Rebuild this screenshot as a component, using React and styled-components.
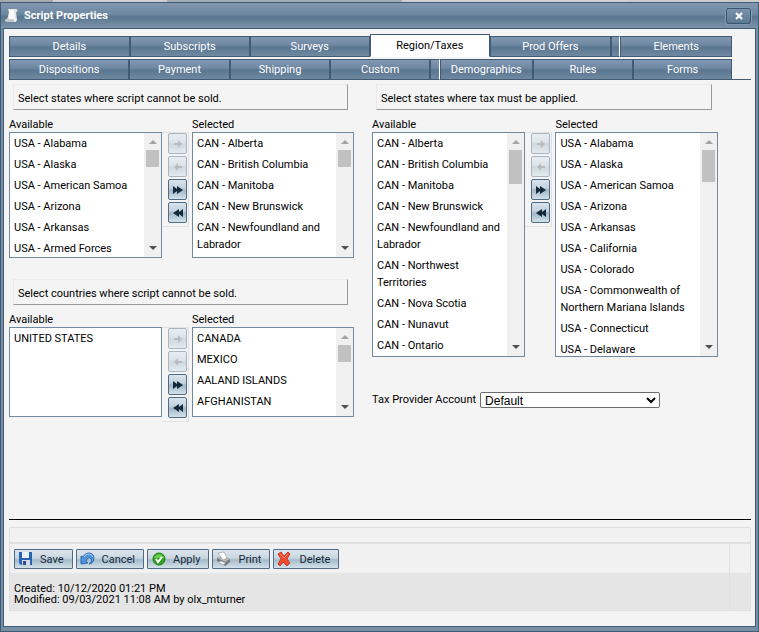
import React, { useState } from 'react'
import styled, { createGlobalStyle } from 'styled-components'

const GlobalStyle = createGlobalStyle`
  * {
    box-sizing: border-box;
  }
  body {
    margin: 0;
    background: #f4f4f4;
    font-family: Roboto, 'Open Sans', sans-serif;
    font-size: 11px;
    line-height: 17px;
    color: #000;
  }
  button {
    font: inherit;
    margin: 0;
    cursor: pointer;
  }
`

const Page = styled.div`
  display: flex;
  flex-direction: column;
  min-height: 100vh;
`

const Backdrop = styled.div`
  height: 2px;
  background: linear-gradient(
    to right,
    #a3a9ad 0 7%,
    #d0d0d0 7% 22%,
    #a5adb4 22% 53%,
    #d0d0d0 53% 83%,
    #cccccc 83%
  );
`

const Dialog = styled.section`
  flex: 1;
  display: flex;
  flex-direction: column;
  padding: 0 2px 4px;
  background: #778fa6;
  border: 1px solid #425b74;
`

const TitleBar = styled.header`
  display: flex;
  align-items: center;
  height: 25px;
  margin: 0 -2px;
  padding: 0 7px 0 4px;
  background: linear-gradient(#8097b0 0%, #6e88a2 45%, #59758f 55%, #7b94aa 100%);

  h1 {
    flex: 1;
    margin: 0 0 0 5px;
    color: #fff;
    font-size: 11px;
    font-weight: 700;
  }
`

const CloseButton = styled.button`
  display: flex;
  align-items: center;
  justify-content: center;
  width: 25px;
  height: 16px;
  padding: 0;
  border: 1px solid #3c5670;
  border-radius: 2px;
  background: linear-gradient(#7b93ab, #5c7892);
  box-shadow: 0 0 0 1px #8198ae;
`

const Content = styled.div`
  flex: 1;
  display: flex;
  flex-direction: column;
  padding: 5px 4px 15px 5px;
  background: #f4f4f4;
  border: 1px solid #425b74;
`

const TabRow = styled.div`
  display: flex;
  align-items: flex-end;
  height: 23px;
  padding-right: 19px;

  & + & {
    padding-right: 0;
  }
`

const Tab = styled.button`
  flex: ${(p) => p.$grow} 1 0;
  min-width: 0;
  height: ${(p) => (p.$active ? 23 : 21)}px;
  padding: 0;
  color: ${(p) => (p.$active ? '#000' : '#fff')};
  border: 1px solid #425b74;
  border-bottom-color: ${(p) => (p.$active ? '#fff' : '#425b74')};
  background: ${(p) =>
    p.$active
      ? '#fff'
      : 'linear-gradient(#8198b1 0%, #7089a3 40%, #5a7690 55%, #7089a1 100%)'};
`

const TabSlack = styled.span`
  flex: 8 1 0;
  height: 21px;
  border: 1px solid #425b74;
  border-right: 1px solid #fff;
  background: linear-gradient(#8198b1 0%, #7089a3 40%, #5a7690 55%, #7089a1 100%);
`

const TabRest = styled.span`
  flex: 0 0 19px;
  height: 21px;
  border-bottom: 1px solid #425b74;
`

const Columns = styled.main`
  display: grid;
  grid-template-columns: 345fr 346fr;
  column-gap: 18px;
  align-items: start;
  padding: 4px 33px 0 0;
`

const Group = styled.section`
  margin-bottom: 21px;
`

const Instruction = styled.p`
  margin: 0 6px 5px 4px;
  padding: 5px 4px 2px;
  border: 1px solid #eaeaea;
  border-right-color: #999;
  border-bottom-color: #999;
`

const Picker = styled.div`
  display: flex;
  align-items: flex-start;
`

const ListColumn = styled.div`
  flex: ${(p) => p.$grow} 1 0;
  min-width: 0;
  margin-left: ${(p) => p.$offset || 0}px;
`

const ListLabel = styled.div`
  height: 17px;
  line-height: 19px;
`

const ListBox = styled.div`
  display: flex;
  height: ${(p) => p.$height}px;
  border: 1px solid #718aa3;
  background: #fff;
`

const Items = styled.ul`
  flex: 1;
  min-width: 0;
  margin: 0;
  padding: 0;
  list-style: none;
  overflow-y: auto;
  scrollbar-width: none;
`

const Item = styled.li`
  padding: 2px 4px;
`

const Scrollbar = styled.div`
  display: flex;
  flex-direction: column;
  align-items: center;
  width: 17px;
  background: #f0f0f0;

  svg {
    flex: none;
  }
`

const Thumb = styled.div`
  width: 13px;
  height: ${(p) => p.$size}px;
  margin-bottom: auto;
  background: #c1c1c1;
`

const Transfer = styled.div`
  display: flex;
  flex-direction: column;
  align-items: flex-end;
  gap: 2px;
  width: 27px;
  margin-top: 17px;
  padding: 0 1px 3px;
  border: 1px solid #e2e2e2;
  border-left: 0;
`

const TransferButton = styled.button`
  display: flex;
  align-items: center;
  justify-content: center;
  width: 19px;
  height: 21px;
  padding: 0;
  border: 1px solid #4f6b86;
  border-radius: 2px;
  background: linear-gradient(#d9e4ec 0%, #c4d3df 40%, #a2b8c8 55%, #d3e2ea 100%);

  &:disabled {
    opacity: 0.45;
    cursor: default;
  }
`

const TaxField = styled.div`
  display: flex;
  align-items: center;
  gap: 4px;
  margin-top: 34px;

  select {
    width: 180px;
    height: 16px;
    padding: 0;
    border: 1px solid #6b6b6b;
    border-radius: 2px;
    background: #fff;
    color: #000;
    font-family: 'Liberation Sans', Arial, sans-serif;
    font-size: 12px;
  }
`

const Footer = styled.footer`
  margin-top: auto;
  padding-top: 7px;
  border-top: 1px solid #000;
`

const FooterGrid = styled.div`
  border: 1px solid #dfdfdf;
  background: #f1f1f1;
`

const FooterSpacer = styled.div`
  height: 16px;
  border-bottom: 2px solid #dfdfdf;
`

const FooterRow = styled.div`
  display: grid;
  grid-template-columns: 1fr 21px;
  background: ${(p) => (p.$shaded ? '#e5e5e5' : '#f1f1f1')};

  & > :last-child {
    border-left: 1px solid #dfdfdf;
  }
`

const Toolbar = styled.div`
  display: flex;
  gap: 3px;
  padding: 5px 4px 4px;
`

const ActionButton = styled.button`
  display: flex;
  align-items: center;
  gap: 7px;
  height: 20px;
  padding: 0 8px 0 2px;
  color: #16293a;
  border: 1px solid #4f6b86;
  border-radius: 1px;
  background: linear-gradient(#dce5ec 0%, #c9d6e0 45%, #a5bac9 55%, #d3e2ea 100%);
`

const AuditInfo = styled.div`
  padding: 10px 4px 5px;
  line-height: 11px;
`

const topTabs = [
  { name: 'Details', grow: 121 },
  { name: 'Subscripts', grow: 121 },
  { name: 'Surveys', grow: 120 },
  { name: 'Region/Taxes', grow: 121 },
  { name: 'Prod Offers', grow: 121, slack: true },
  { name: 'Elements', grow: 112 },
]

const bottomTabs = [
  { name: 'Dispositions', grow: 121 },
  { name: 'Payment', grow: 101 },
  { name: 'Shipping', grow: 101 },
  { name: 'Custom', grow: 100, slack: true },
  { name: 'Demographics', grow: 93 },
  { name: 'Rules', grow: 101 },
  { name: 'Forms', grow: 99 },
]

const usStates = [
  'USA - Alabama',
  'USA - Alaska',
  'USA - American Samoa',
  'USA - Arizona',
  'USA - Arkansas',
]

const canada = [
  'CAN - Alberta',
  'CAN - British Columbia',
  'CAN - Manitoba',
  'CAN - New Brunswick',
  'CAN - Newfoundland and Labrador',
]

const taxAvailable = [
  ...canada,
  'CAN - Northwest Territories',
  'CAN - Nova Scotia',
  'CAN - Nunavut',
  'CAN - Ontario',
]

const taxSelected = [
  ...usStates,
  'USA - California',
  'USA - Colorado',
  'USA - Commonwealth of Northern Mariana Islands',
  'USA - Connecticut',
  'USA - Delaware',
]

const countries = ['CANADA', 'MEXICO', 'AALAND ISLANDS', 'AFGHANISTAN']

const arrows = {
  right: 'M2 5h4V2l4 4-4 4V7H2z',
  left: 'M10 5H6V2L2 6l4 4V7h4z',
  allRight: 'M1 2l4 3V2l6 4-6 4V7l-4 3z',
  allLeft: 'M11 2L7 5V2L1 6l6 4V7l4 3z',
}

function Arrow({ kind }) {
  return (
    <svg width="12" height="12" viewBox="0 0 12 12">
      <path d={arrows[kind]} fill={kind.startsWith('all') ? '#122a3b' : '#777'} />
    </svg>
  )
}

function ScriptIcon() {
  return (
    <svg width="14" height="16" viewBox="0 0 14 16">
      <path d="M3 1h8c2 0 2 3 0 3l1 8H2l2-8z" fill="#e1e5e8" />
      <path d="M4 2h5l1 9H4z" fill="#fafafa" />
      <path d="M0 12c0-1 1-1 2-1h7c-1 1 0 3 1 3H2c-1 0-2-1-2-2z" fill="#c6cacd" />
      <path d="M9 11h3c0 2-1 3-2 3s-2-2-1-3z" fill="#eff1f2" />
    </svg>
  )
}

function SaveIcon() {
  return (
    <svg width="16" height="16" viewBox="0 0 16 16">
      <path d="M2 1h13v13H4l-2-2z" fill="#2a62b5" />
      <path d="M5 1h7v6H5z" fill="#e9f1fb" />
      <path d="M5 9h8v5H5z" fill="#d5dce6" />
      <path d="M6 10h3v4H6z" fill="#244f92" />
    </svg>
  )
}

function CancelIcon() {
  return (
    <svg width="16" height="16" viewBox="0 0 16 16">
      <path
        d="M2 5v8l7-1-2-2c1-3 4-4 5-2s0 4-2 5c3 0 5-3 5-6 0-6-8-7-11-1z"
        fill="#4f94dc"
        stroke="#1c5ba6"
        strokeWidth="0.8"
      />
      <path d="M5 6c2-4 7-4 9 0" fill="none" stroke="#a9d2f7" />
    </svg>
  )
}

function ApplyIcon() {
  return (
    <svg width="16" height="16" viewBox="0 0 16 16">
      <circle cx="9" cy="8" r="6" fill="#2fa51f" stroke="#187d10" />
      <path d="M4 7c1-5 9-5 10 0z" fill="#6ccb50" />
      <path d="M6 8l2 3 4-5" fill="none" stroke="#fff" strokeWidth="2" />
    </svg>
  )
}

function PrintIcon() {
  return (
    <svg width="16" height="16" viewBox="0 0 16 16">
      <path d="M2 7l5-2 8 3v3l-5 4-8-5z" fill="#75797c" />
      <path d="M2 7l5-2 8 3-5 3z" fill="#b4b8ba" />
      <path d="M3 2l6-1 3 6-4 2z" fill="#fff" stroke="#92979b" strokeWidth="0.6" />
      <path d="M3 11l3-1 5 2-3 2z" fill="#f6f6f6" stroke="#7c8083" strokeWidth="0.5" />
    </svg>
  )
}

function DeleteIcon() {
  return (
    <svg width="16" height="16" viewBox="0 0 16 16">
      <path
        d="M2 3l3-2 3 4 4-4 2 2-3 5 3 4-3 3-4-4-3 4-2-2 3-5z"
        fill="#f04a2d"
        stroke="#c62a14"
        strokeWidth="0.8"
      />
      <path d="M4 3l4 4 4-4" fill="none" stroke="#ff9278" />
    </svg>
  )
}

const actions = [
  { name: 'Save', Icon: SaveIcon },
  { name: 'Cancel', Icon: CancelIcon },
  { name: 'Apply', Icon: ApplyIcon },
  { name: 'Print', Icon: PrintIcon },
  { name: 'Delete', Icon: DeleteIcon },
]

function Tabs({ tabs, current, onSelect, children }) {
  return (
    <TabRow role="tablist">
      {tabs.map(({ name, grow, slack }) => (
        <React.Fragment key={name}>
          <Tab
            role="tab"
            $grow={grow}
            $active={name === current}
            aria-selected={name === current}
            onClick={() => onSelect(name)}
          >
            {name}
          </Tab>
          {slack && <TabSlack />}
        </React.Fragment>
      ))}
      {children}
    </TabRow>
  )
}

function List({ label, items, height, thumb, grow, offset }) {
  return (
    <ListColumn $grow={grow} $offset={offset}>
      <ListLabel>{label}</ListLabel>
      <ListBox $height={height}>
        <Items role="listbox" aria-label={label}>
          {items.map((item) => (
            <Item key={item} role="option">
              {item}
            </Item>
          ))}
        </Items>
        {thumb && (
          <Scrollbar>
            <svg width="17" height="17" viewBox="0 0 17 17">
              <path d="M5 11h8L9 7z" fill="#a3a3a3" />
            </svg>
            <Thumb $size={thumb} />
            <svg width="17" height="17" viewBox="0 0 17 17">
              <path d="M5 6h8l-4 4z" fill="#505050" />
            </svg>
          </Scrollbar>
        )}
      </ListBox>
    </ListColumn>
  )
}

function DualList({ title, height, available, selected, thumbs }) {
  return (
    <Group>
      <Instruction>{title}</Instruction>
      <Picker>
        <List
          label="Available"
          items={available}
          height={height}
          thumb={thumbs[0]}
          grow={153}
        />
        <Transfer>
          <TransferButton disabled aria-label="Add">
            <Arrow kind="right" />
          </TransferButton>
          <TransferButton disabled aria-label="Remove">
            <Arrow kind="left" />
          </TransferButton>
          <TransferButton aria-label="Add all">
            <Arrow kind="allRight" />
          </TransferButton>
          <TransferButton aria-label="Remove all">
            <Arrow kind="allLeft" />
          </TransferButton>
        </Transfer>
        <List
          label="Selected"
          items={selected}
          height={height}
          thumb={thumbs[1]}
          grow={162}
          offset={3}
        />
      </Picker>
    </Group>
  )
}

function App() {
  const [tab, setTab] = useState('Region/Taxes')

  return (
    <Page>
      <GlobalStyle />
      <Backdrop />
      <Dialog role="dialog" aria-label="Script Properties">
        <TitleBar>
          <ScriptIcon />
          <h1>Script Properties</h1>
          <CloseButton aria-label="Close">
            <svg width="8" height="8" viewBox="0 0 8 8">
              <path d="M1 1l6 6M7 1L1 7" stroke="#fff" strokeWidth="2" />
            </svg>
          </CloseButton>
        </TitleBar>
        <Content>
          <Tabs tabs={topTabs} current={tab} onSelect={setTab} />
          <Tabs tabs={bottomTabs} current={tab} onSelect={setTab}>
            <TabRest />
          </Tabs>
          <Columns>
            <div>
              <DualList
                title="Select states where script cannot be sold."
                height={126}
                available={[...usStates, 'USA - Armed Forces']}
                selected={canada}
                thumbs={[17, 17]}
              />
              <DualList
                title="Select countries where script cannot be sold."
                height={90}
                available={['UNITED STATES']}
                selected={countries}
                thumbs={[null, 17]}
              />
            </div>
            <div>
              <DualList
                title="Select states where tax must be applied."
                height={225}
                available={taxAvailable}
                selected={taxSelected}
                thumbs={[34, 32]}
              />
              <TaxField>
                <label htmlFor="tax-provider">Tax Provider Account</label>
                <select id="tax-provider">
                  <option>Default</option>
                </select>
              </TaxField>
            </div>
          </Columns>
          <Footer>
            <FooterGrid>
              <FooterSpacer />
              <FooterRow>
                <Toolbar>
                  {actions.map(({ name, Icon }) => (
                    <ActionButton key={name}>
                      <Icon />
                      {name}
                    </ActionButton>
                  ))}
                </Toolbar>
                <span />
              </FooterRow>
              <FooterRow $shaded>
                <AuditInfo>
                  <div>Created: 10/12/2020 01:21 PM</div>
                  <div>Modified: 09/03/2021 11:08 AM by olx_mturner</div>
                </AuditInfo>
                <span />
              </FooterRow>
            </FooterGrid>
          </Footer>
        </Content>
      </Dialog>
    </Page>
  )
}

export default App
